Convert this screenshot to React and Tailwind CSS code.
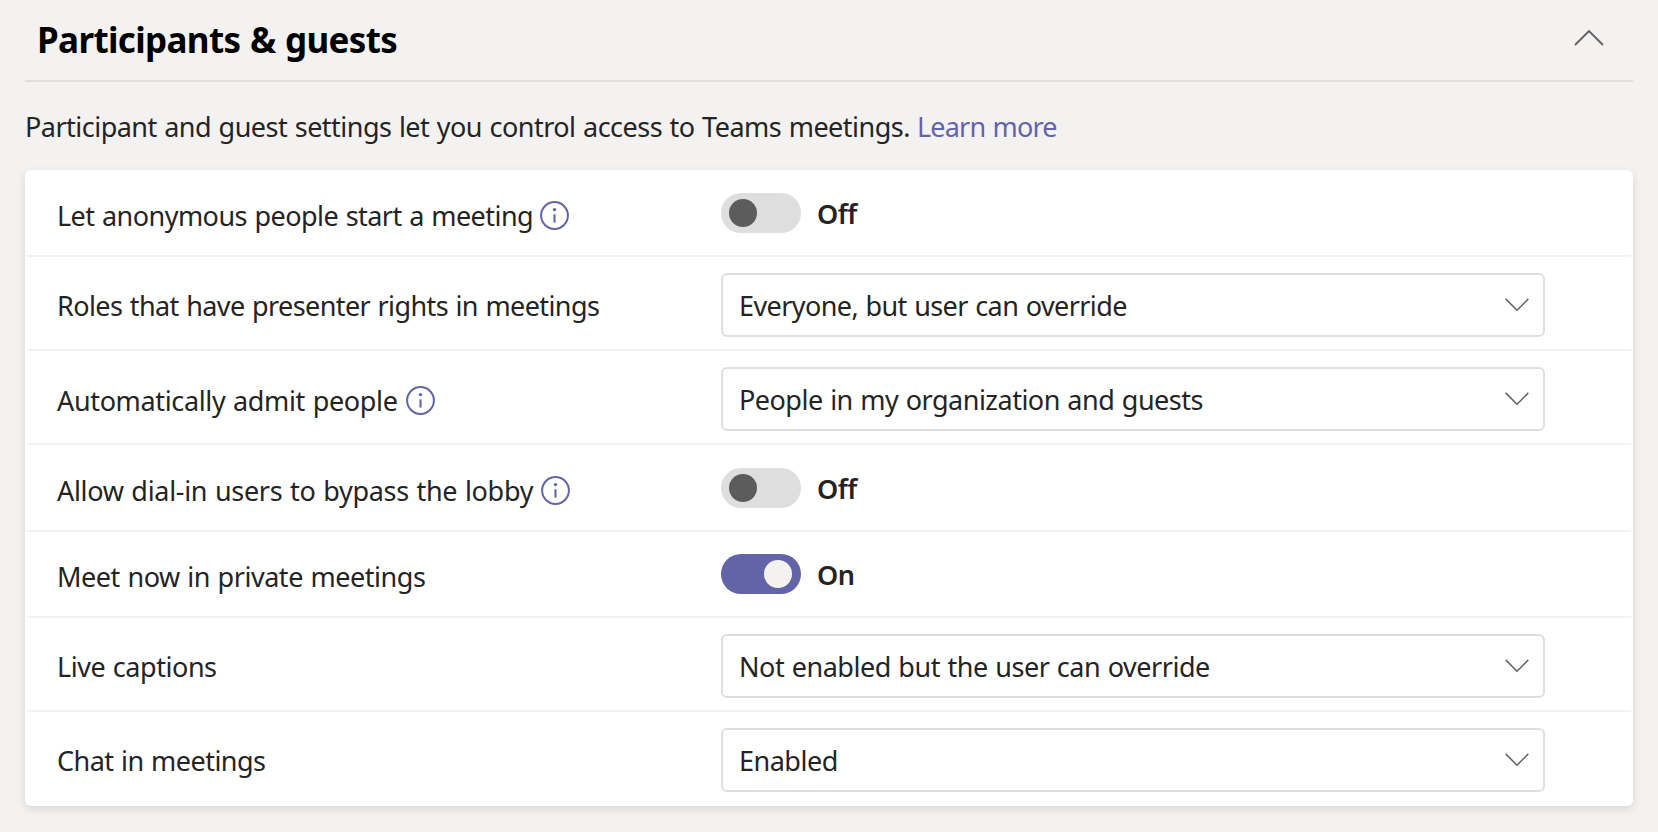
function InfoIcon({ className }) {
  return (
    <svg className={`-mt-px h-[29px] w-[29px] shrink-0 text-[#6264a7] ${className}`} viewBox="0 0 29 29" fill="none">
      <circle cx="14.5" cy="14.5" r="13.4" stroke="currentColor" strokeWidth="2" />
      <circle cx="14.5" cy="8.6" r="1.7" fill="currentColor" />
      <path d="M14.5 13.3V21.6" stroke="currentColor" strokeWidth="2.1" />
    </svg>
  );
}

function Toggle({ on, labelClass }) {
  return (
    <div className="flex items-center">
      <button
        role="switch"
        aria-checked={on}
        className={`flex h-10 w-20 items-center rounded-full ${on ? "justify-end bg-[#6264a7] pr-[9px]" : "bg-[#dedede] pl-2"}`}
      >
        <span className={`h-7 w-7 rounded-full ${on ? "bg-[#f3f2f1]" : "bg-[#5c5c5c]"}`} />
      </button>
      <span className={`mt-0.5 ml-4 font-semibold ${labelClass}`}>{on ? "On" : "Off"}</span>
    </div>
  );
}

function Select({ value, textClass }) {
  return (
    <button className="flex h-16 w-[824px] items-center justify-between rounded-md border-2 border-[#dedede] bg-white pr-[14px] pl-4 text-left [word-spacing:1px]">
      <span className={`pt-0.5 ${textClass}`}>{value}</span>
      <svg className="h-[14px] w-[24px]" viewBox="0 0 24 14" fill="none">
        <path d="M0.7 0.9L12 12.2L23.3 0.9" stroke="#616161" strokeWidth="1.5" />
      </svg>
    </button>
  );
}

const rows = [
  { label: "Let anonymous people start a meeting", row: "h-[87px] border-b-2", labelClass: "pt-7 tracking-[-0.54px]", info: "ml-[7px]", control: <Toggle labelClass="tracking-[-0.5px]" />, controlClass: "pt-[23px]" },
  { label: "Roles that have presenter rights in meetings", row: "h-[94px] border-b-2", labelClass: "pt-[31px] tracking-[-0.59px]", control: <Select value="Everyone, but user can override" textClass="tracking-[-0.59px]" />, controlClass: "pt-4" },
  { label: "Automatically admit people", row: "h-[94px] border-b-2", labelClass: "pt-8 tracking-[-0.35px]", info: "ml-2", control: <Select value="People in my organization and guests" textClass="tracking-[-0.51px]" />, controlClass: "pt-4" },
  { label: "Allow dial-in users to bypass the lobby", row: "h-[87px] border-b-2", labelClass: "pt-7 tracking-[-0.31px]", info: "ml-2", control: <Toggle labelClass="tracking-[-0.5px]" />, controlClass: "pt-[23px]" },
  { label: "Meet now in private meetings", row: "h-[86px] border-b-2", labelClass: "pt-[27px] tracking-[-0.46px]", control: <Toggle on labelClass="tracking-[-0.5px]" />, controlClass: "pt-[22px]" },
  { label: "Live captions", row: "h-[94px] border-b-2", labelClass: "pt-[31px] tracking-[-0.45px]", control: <Select value="Not enabled but the user can override" textClass="tracking-[-0.48px]" />, controlClass: "pt-4" },
  { label: "Chat in meetings", row: "h-[94px]", labelClass: "pt-[31px] tracking-[-0.53px]", control: <Select value="Enabled" textClass="tracking-[-0.5px]" />, controlClass: "pt-4" },
];

export default function App() {
  return (
    <main className="h-[832px] w-[1658px] overflow-hidden bg-[#f3f2f1] px-[25px] font-['Noto_Sans','Open_Sans',sans-serif] text-[27px] leading-9 whitespace-nowrap text-[#252423]">
      <header className="flex h-[82px] items-start justify-between border-b-2 border-[#e1dfdd] pr-[29px] pl-3">
        <h1 className="pt-4 text-[35px] leading-[48px] font-bold tracking-[-0.64px] text-black [word-spacing:1px]">Participants &amp; guests</h1>
        <svg className="mt-[29px] h-[17px] w-[30px]" viewBox="0 0 30 17" fill="none">
          <path d="M1 16L15 2L29 16" stroke="#616161" strokeWidth="1.8" />
        </svg>
      </header>

      <p className="flex h-[88px] items-start pt-[27px] [word-spacing:1px]">
        <span className="w-[892px] tracking-[-0.52px]">Participant and guest settings let you control access to Teams meetings.</span>
        <a className="tracking-[-0.8px] text-[#6264a7]">Learn more</a>
      </p>

      <section className="h-[636px] rounded-md bg-white px-px shadow-[0_3px_8px_rgba(0,0,0,0.12)]">
        {rows.map((r) => (
          <div key={r.label} className={`flex items-start rounded-[3px] border-[#f3f2f1] pl-[31px] ${r.row}`}>
            <div className={`flex w-[664px] items-center [word-spacing:1px] ${r.labelClass}`}>
              {r.label}
              {r.info && <InfoIcon className={r.info} />}
            </div>
            <div className={r.controlClass}>{r.control}</div>
          </div>
        ))}
      </section>
    </main>
  );
}
